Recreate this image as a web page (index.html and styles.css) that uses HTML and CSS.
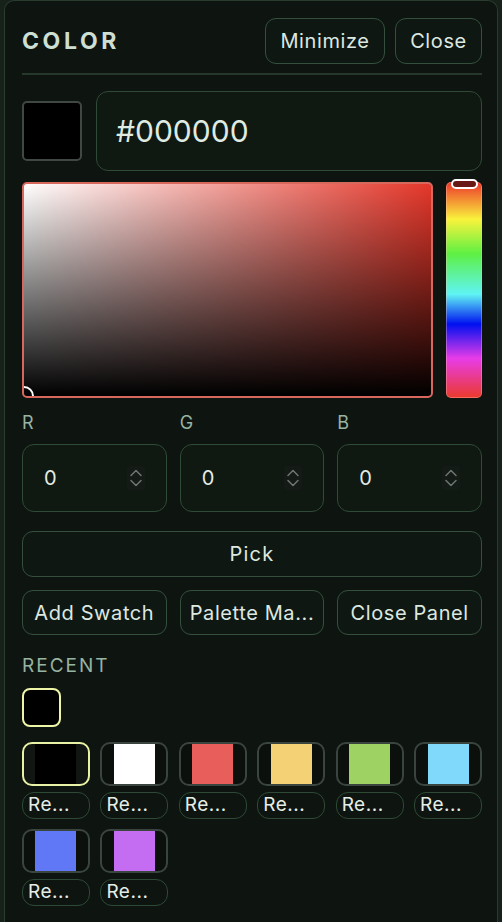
FILE: index.html
```
<!DOCTYPE html>
<html lang="en">
<head>
<meta charset="utf-8">
<title>Color</title>
<link rel="stylesheet" href="styles.css">
</head>
<body>
<div class="panel">
  <div class="header">
    <div class="title">COLOR</div>
    <div class="header-actions">
      <button class="btn btn-min">Minimize</button>
      <button class="btn btn-close">Close</button>
    </div>
  </div>
  <div class="divider"></div>

  <div class="hex-row">
    <div class="preview"></div>
    <div class="hex-input">#000000</div>
  </div>

  <div class="picker-row">
    <div class="sat">
      <div class="sat-marker"></div>
    </div>
    <div class="hue">
      <div class="hue-handle"></div>
    </div>
  </div>

  <div class="rgb">
    <div class="rgb-field">
      <div class="rgb-label">R</div>
      <div class="num-input"><span>0</span><span class="spin"><svg width="18" height="24" viewBox="0 0 18 24"><path d="M4 9.5 L9 4.5 L14 9.5" /><path d="M4 14.5 L9 19.5 L14 14.5" /></svg></span></div>
    </div>
    <div class="rgb-field">
      <div class="rgb-label">G</div>
      <div class="num-input"><span>0</span><span class="spin"><svg width="18" height="24" viewBox="0 0 18 24"><path d="M4 9.5 L9 4.5 L14 9.5" /><path d="M4 14.5 L9 19.5 L14 14.5" /></svg></span></div>
    </div>
    <div class="rgb-field">
      <div class="rgb-label">B</div>
      <div class="num-input"><span>0</span><span class="spin"><svg width="18" height="24" viewBox="0 0 18 24"><path d="M4 9.5 L9 4.5 L14 9.5" /><path d="M4 14.5 L9 19.5 L14 14.5" /></svg></span></div>
    </div>
  </div>

  <button class="btn btn-pick">Pick</button>

  <div class="actions">
    <button class="btn btn-action">Add Swatch</button>
    <button class="btn btn-action">Palette Ma...</button>
    <button class="btn btn-action">Close Panel</button>
  </div>

  <div class="section-label">RECENT</div>
  <div class="current-swatch"></div>

  <div class="swatch-grid">
    <div class="cell"><div class="swatch selected"><span class="chip c-black"></span></div><div class="chip-label">Re...</div></div>
    <div class="cell"><div class="swatch"><span class="chip c-white"></span></div><div class="chip-label">Re...</div></div>
    <div class="cell"><div class="swatch"><span class="chip c-red"></span></div><div class="chip-label">Re...</div></div>
    <div class="cell"><div class="swatch"><span class="chip c-yellow"></span></div><div class="chip-label">Re...</div></div>
    <div class="cell"><div class="swatch"><span class="chip c-green"></span></div><div class="chip-label">Re...</div></div>
    <div class="cell"><div class="swatch"><span class="chip c-cyan"></span></div><div class="chip-label">Re...</div></div>
    <div class="cell"><div class="swatch"><span class="chip c-blue"></span></div><div class="chip-label">Re...</div></div>
    <div class="cell"><div class="swatch"><span class="chip c-purple"></span></div><div class="chip-label">Re...</div></div>
  </div>
</div>
</body>
</html>
```

FILE: styles.css
```
* { box-sizing: border-box; }

html, body {
  margin: 0;
  padding: 0;
  background: #16211a;
  font-family: Inter, "Noto Sans", sans-serif;
  color: #dde8e0;
}

.panel {
  margin: 0 4px;
  min-height: 922px;
  background: #0e1410;
  border: 1.5px solid #2a3b2f;
  border-bottom: none;
  border-radius: 10px 10px 0 0;
  padding: 17px 15px 0 17px;
}

.header {
  display: flex;
  align-items: center;
  justify-content: space-between;
  height: 46px;
}

.title {
  font-size: 23px;
  font-weight: 700;
  letter-spacing: 3.6px;
  color: #cddfd3;
}

.header-actions {
  display: flex;
  gap: 10px;
}

.btn {
  font-family: Inter, "Noto Sans", sans-serif;
  background: #0f1712;
  color: #dde8e0;
  border: 1.5px solid #34503d;
  border-radius: 11px;
  padding: 0;
  font-size: 20px;
  letter-spacing: 0.6px;
}

.btn-min { width: 120px; height: 46px; }
.btn-close { width: 87px; height: 46px; }

.divider {
  height: 2px;
  background: #26382c;
  margin-top: 9px;
}

.hex-row {
  display: flex;
  align-items: center;
  gap: 14px;
  margin-top: 16px;
}

.preview {
  width: 60px;
  height: 60px;
  background: #000;
  border: 2px solid #404843;
  border-radius: 5px;
}

.hex-input {
  flex: 1;
  height: 80px;
  border: 1.5px solid #2f4a37;
  border-radius: 12px;
  background: #101812;
  display: flex;
  align-items: center;
  padding-left: 19px;
  font-size: 30px;
  color: #dfeae2;
}

.picker-row {
  display: flex;
  gap: 13px;
  margin-top: 11px;
  height: 216px;
}

.sat {
  flex: 1;
  position: relative;
  overflow: hidden;
  border: 2px solid #d8685e;
  border-radius: 5px;
  background:
    linear-gradient(to top, #000 0%, rgba(0,0,0,0) 100%),
    linear-gradient(to right, #ffffff 0%, #e5372a 100%);
}

.sat-marker {
  position: absolute;
  left: -10px;
  bottom: -10px;
  width: 20px;
  height: 20px;
  border: 2px solid #fff;
  border-radius: 50%;
}

.hue {
  width: 36px;
  position: relative;
  border-radius: 5px;
  border: 1px solid rgba(255, 200, 190, 0.35);
  background: linear-gradient(to bottom,
    #ee3a2c 0%,
    #f9f33c 17%,
    #5ef043 33%,
    #5ff4f4 52%,
    #0010f0 66%,
    #e83ce8 82%,
    #ea3a30 100%);
}

.hue-handle {
  position: absolute;
  left: 4px;
  right: 3px;
  top: -4px;
  height: 10px;
  border: 2px solid #fff;
  border-radius: 6px;
  background: #6a1a14;
}

.rgb {
  display: grid;
  grid-template-columns: repeat(3, 1fr);
  gap: 13px;
  margin-top: 13px;
}

.rgb-field {
  display: flex;
  flex-direction: column;
  gap: 9px;
}

.rgb-label {
  font-size: 18px;
  color: #97b3a1;
  line-height: 24px;
}

.num-input {
  height: 68px;
  border: 1.5px solid #2f4a37;
  border-radius: 12px;
  background: #101812;
  display: flex;
  align-items: center;
  justify-content: space-between;
  padding: 0 21px 0 21px;
  font-size: 20px;
  color: #e3ece6;
}

.spin {
  width: 18px;
  height: 24px;
  background: #141b16;
  border-radius: 3px;
  display: block;
}

.spin svg { display: block; }

.spin path {
  fill: none;
  stroke: #6c7770;
  stroke-width: 1.5;
  stroke-linecap: round;
  stroke-linejoin: round;
}

.btn-pick {
  display: block;
  width: 100%;
  height: 46px;
  margin-top: 19px;
  letter-spacing: 1.2px;
}

.actions {
  display: grid;
  grid-template-columns: repeat(3, 1fr);
  gap: 13px;
  margin-top: 13px;
}

.btn-action {
  height: 45px;
  white-space: nowrap;
  overflow: hidden;
}

.section-label {
  margin-top: 19px;
  font-size: 19px;
  letter-spacing: 2px;
  color: #97b3a1;
  line-height: 24px;
}

.current-swatch {
  width: 39px;
  height: 39px;
  margin-top: 10px;
  background: #000;
  border: 2px solid #eef4a8;
  border-radius: 8px;
}

.swatch-grid {
  display: grid;
  grid-template-columns: repeat(6, 1fr);
  column-gap: 10.5px;
  row-gap: 10px;
  margin-top: 15px;
}

.cell {
  display: flex;
  flex-direction: column;
  gap: 6px;
}

.swatch {
  height: 44px;
  border: 2px solid #3b4540;
  border-radius: 10px;
  background: #0b100c;
  display: flex;
  justify-content: center;
  overflow: hidden;
}

.swatch.selected {
  border-color: #e9f1a4;
  background: #121612;
}

.chip {
  width: 41px;
  height: 100%;
  display: block;
}

.c-black { background: #000000; }
.c-white { background: #ffffff; }
.c-red { background: #e85e5a; }
.c-yellow { background: #f5d176; }
.c-green { background: #9ed262; }
.c-cyan { background: #80d8fb; }
.c-blue { background: #6078f6; }
.c-purple { background: #c46cf2; }

.chip-label {
  height: 27px;
  border: 1.5px solid #2e4a36;
  border-radius: 12px;
  font-size: 19px;
  line-height: 24px;
  padding-left: 5px;
  letter-spacing: 0.5px;
  color: #e4eee7;
  white-space: nowrap;
  overflow: hidden;
}
```
